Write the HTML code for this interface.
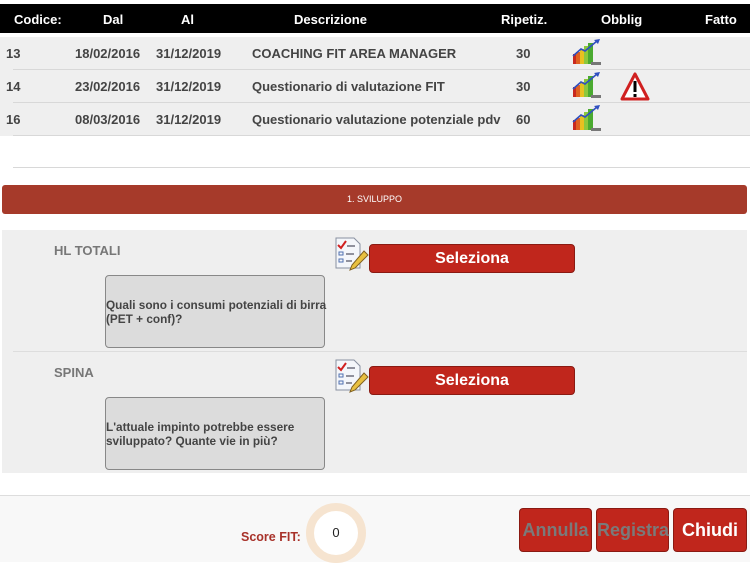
<!DOCTYPE html>
<html><head><meta charset="utf-8"><style>
*{margin:0;padding:0;box-sizing:border-box}
body{width:750px;height:562px;background:#fff;font-family:"Liberation Sans",Arial,sans-serif;position:relative;overflow:hidden;color:#333}
.abs{position:absolute}
.hdr{left:0;top:4px;width:750px;height:29px;background:#000;color:#fff;font-size:13px;font-weight:bold}
.hdr span{position:absolute;top:8px}
.row{left:0;width:750px;height:33px;background:#efefef;font-size:13px;font-weight:bold;color:#444}
.row span{position:absolute;top:9px}
.sep{left:13px;width:737px;height:1px;background:#d8d8d8}
.bar{left:2px;top:185px;width:745px;height:29px;background:#a63a2a;border-radius:3px;color:#fff;font-size:9px;text-align:center;line-height:29px}
.panel{left:2px;top:230px;width:745px;height:243px;background:#efefef}
.lbl{font-size:13px;font-weight:bold;color:#777}
.box{width:220px;height:73px;background:#dcdcdc;border:1px solid #888;border-radius:4px;font-size:11.8px;font-weight:bold;color:#444;padding-top:22px;line-height:14px;white-space:nowrap;overflow:visible}
.btn{width:206px;height:29px;background:#c0261c;border:1px solid #8a1a12;border-radius:4px;color:#fff;font-size:16px;font-weight:bold;text-align:center;line-height:27px}
.foot{left:0;top:495px;width:750px;height:67px;background:#f8f8f8;border-top:1px solid #ddd}
.fb{top:508px;height:44px;background:#c0261c;border:1px solid #8a1a12;border-radius:4px;font-size:18px;font-weight:bold;text-align:center;line-height:42px}
</style></head><body>
<div class="abs hdr"><span style="left:14px">Codice:</span><span style="left:103px">Dal</span><span style="left:181px">Al</span><span style="left:294px">Descrizione</span><span style="left:501px">Ripetiz.</span><span style="left:601px">Obblig</span><span style="left:705px">Fatto</span></div>

<div class="abs row" style="top:37px"><span style="left:6px">13</span><span style="left:75px">18/02/2016</span><span style="left:156px">31/12/2019</span><span style="left:252px">COACHING FIT AREA MANAGER</span><span style="left:516px">30</span></div>
<div class="abs sep" style="top:69px"></div>
<div class="abs row" style="top:70px"><span style="left:6px">14</span><span style="left:75px">23/02/2016</span><span style="left:156px">31/12/2019</span><span style="left:252px">Questionario di valutazione FIT</span><span style="left:516px">30</span></div>
<div class="abs sep" style="top:102px"></div>
<div class="abs row" style="top:103px"><span style="left:6px">16</span><span style="left:75px">08/03/2016</span><span style="left:156px">31/12/2019</span><span style="left:252px">Questionario valutazione potenziale pdv</span><span style="left:516px">60</span></div>
<div class="abs sep" style="top:135px"></div>
<div class="abs sep" style="top:167px"></div>

<svg class="abs" style="left:0;top:0" width="750" height="140">
<defs><g id="ch">
<rect x="0" y="14" width="3" height="10" fill="#c8281e"/><rect x="3" y="12" width="4" height="12" fill="#e06020"/><rect x="7" y="9" width="4" height="15" fill="#e8c020"/><rect x="11" y="6" width="4" height="18" fill="#8cc83c"/><rect x="15" y="3" width="5" height="21" fill="#4aaa30"/><rect x="18" y="22" width="10" height="3" fill="#777"/>
<path d="M0 16 L8 9 L12 11 L24 1" stroke="#3050c0" stroke-width="1.6" fill="none"/><path d="M21 0 L27 -1 L25 4z" fill="#3050c0"/>
</g></defs>
<use href="#ch" x="573" y="40"/><use href="#ch" x="573" y="73"/><use href="#ch" x="573" y="106"/>
<path d="M635 74 L648 99 L622 99 Z" fill="#fff" stroke="#d02020" stroke-width="3" stroke-linejoin="round"/>
<rect x="633.5" y="81" width="3" height="11" fill="#000"/><rect x="633.5" y="94" width="3" height="3" fill="#000"/>
</svg>

<div class="abs bar">1. SVILUPPO</div>
<div class="abs panel"></div>
<div class="abs" style="left:13px;top:351px;width:734px;height:1px;background:#ddd"></div>

<div class="abs lbl" style="left:54px;top:243px">HL TOTALI</div>
<div class="abs box" style="left:105px;top:275px">Quali sono i consumi potenziali di birra<br>(PET + conf)?</div>
<div class="abs lbl" style="left:54px;top:365px">SPINA</div>
<div class="abs box" style="left:105px;top:397px">L'attuale impinto potrebbe essere<br>sviluppato? Quante vie in più?</div>

<svg class="abs" style="left:334px;top:237px" width="36" height="36"><g id="ic">
<path d="M2 1 H20 L26 7 V31 H2 Z" fill="#f4f6fa" stroke="#8890a0"/>
<path d="M4 8 L7 11 L12 4" stroke="#d02020" stroke-width="2" fill="none"/>
<rect x="5" y="15" width="4" height="3" fill="none" stroke="#5070b0"/><rect x="5" y="22" width="4" height="3" fill="none" stroke="#5070b0"/>
<path d="M13 9 H21 M12 17 H20 M12 24 H18" stroke="#556" stroke-width="1.2"/>
<path d="M30 14 L34 18 L21 31 L16 33 L18 28 Z" fill="#e8c040" stroke="#806020"/>
</g></svg>
<svg class="abs" style="left:334px;top:359px" width="36" height="36"><use href="#ic"/></svg>
<div class="abs btn" style="left:369px;top:244px">Seleziona</div>
<div class="abs btn" style="left:369px;top:366px">Seleziona</div>

<div class="abs foot"></div>
<div class="abs" style="left:241px;top:530px;font-size:12.5px;font-weight:bold;color:#a8322a">Score FIT:</div>
<div class="abs" style="left:306px;top:503px;width:60px;height:60px;border-radius:50%;border:8px solid #f6e4d0;background:#fff;text-align:center;line-height:44px;font-size:13px;color:#222">0</div>
<div class="abs fb" style="left:519px;width:73px;color:#7a7a7a">Annulla</div>
<div class="abs fb" style="left:596px;width:73px;color:#7a7a7a">Registra</div>
<div class="abs fb" style="left:673px;width:74px;color:#fff">Chiudi</div>
</body></html>
